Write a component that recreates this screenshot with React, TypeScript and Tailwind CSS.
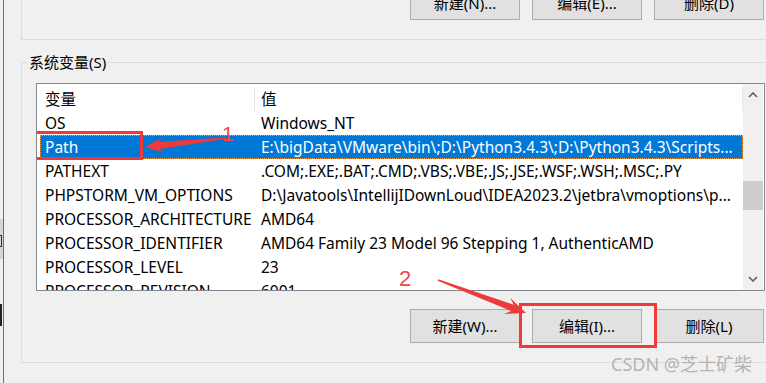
import React from "react";

const rows: [string, string][] = [
  ["OS", "Windows_NT"],
  ["Path", "E:\\bigData\\VMware\\bin\\;D:\\Python3.4.3\\;D:\\Python3.4.3\\Scripts..."],
  ["PATHEXT", ".COM;.EXE;.BAT;.CMD;.VBS;.VBE;.JS;.JSE;.WSF;.WSH;.MSC;.PY"],
  ["PHPSTORM_VM_OPTIONS", "D:\\Javatools\\IntellijIDownLoud\\IDEA2023.2\\jetbra\\vmoptions\\p..."],
  ["PROCESSOR_ARCHITECTURE", "AMD64"],
  ["PROCESSOR_IDENTIFIER", "AMD64 Family 23 Model 96 Stepping 1, AuthenticAMD"],
  ["PROCESSOR_LEVEL", "23"],
  ["PROCESSOR_REVISION", "6001"],
];

// tapered annotation arrow, tail -> tip
function arrowPoints(x1: number, y1: number, x2: number, y2: number, head = 20, half = 8) {
  const dx = x2 - x1;
  const dy = y2 - y1;
  const len = Math.hypot(dx, dy);
  const ux = dx / len;
  const uy = dy / len;
  const px = -uy;
  const py = ux;
  const pt = (bx: number, by: number, along: number, side: number) =>
    `${(bx + ux * along + px * side).toFixed(1)},${(by + uy * along + py * side).toFixed(1)}`;
  return [
    pt(x1, y1, 0, 0.8),
    pt(x2, y2, -head * 0.72, 3.4),
    pt(x2, y2, -head, half),
    pt(x2, y2, 0, 0),
    pt(x2, y2, -head, -half),
    pt(x2, y2, -head * 0.72, -3.4),
    pt(x1, y1, 0, -0.8),
  ].join(" ");
}

const Button = ({ label }: { label: string }) => (
  <div className="w-[110px] h-[34px] bg-[#e1e1e1] border border-[#adadad] flex items-center justify-center text-[15px] text-black">
    {label}
  </div>
);

const Chevron = ({ up }: { up?: boolean }) => (
  <svg width="10" height="6" viewBox="0 0 10 6">
    <polyline
      points={up ? "1,5 5,1 9,5" : "1,1 5,5 9,1"}
      fill="none"
      stroke="#606060"
      strokeWidth="1.6"
    />
  </svg>
);

export default function App() {
  return (
    <div
      className="relative w-[766px] h-[383px] bg-[#f0f0f0] flex overflow-hidden text-black"
      style={{ fontFamily: "'Noto Sans', 'Noto Sans CJK SC', sans-serif" }}
    >
      {/* window behind, left edge */}
      <div className="w-[3px] flex flex-col">
        <div className="h-[219px]" />
        <div className="h-[40px] bg-[#d6d6d6] pt-[16px]">
          <div className="w-[2px] h-[12px] border-y border-r border-[#333]" />
        </div>
        <div className="h-[45px]" />
        <div className="w-[2px] h-[22px] bg-[#222]" />
      </div>
      <div className="w-px bg-[#6e6e6e]" />

      <div className="flex-1 flex flex-col">
        {/* user variables group (cut off) */}
        <div className="ml-[17px] h-[40px] border-l border-b border-[#dcdcdc] flex justify-end items-start gap-[12px] pr-[2px]">
          <div className="-mt-[14px]">
            <Button label="新建(N)..." />
          </div>
          <div className="-mt-[14px]">
            <Button label="编辑(E)..." />
          </div>
          <div className="-mt-[14px]">
            <Button label="删除(D)" />
          </div>
        </div>

        {/* system variables group */}
        <div className="mt-[22px] ml-[17px] h-[301px] border-l border-y border-[#dcdcdc] flex flex-col">
          <div className="-mt-[11px] ml-[6px] px-[1px] w-fit h-[20px] leading-[20px] bg-[#f0f0f0] text-[15px]">
            系统变量(S)
          </div>

          <div className="mt-[11px] ml-[14px] w-[729px] h-[208px] border border-[#828790] bg-white flex text-[15.5px]">
            <div className="w-[706px] overflow-hidden flex flex-col">
              <div className="h-[27px] pt-[3px] ml-[3px] flex shrink-0 leading-[24px]">
                <div className="w-[214px] pl-[5px]">变量</div>
                <div className="flex-1 border-l border-r border-[#e5e5e5] pl-[6px]">值</div>
              </div>
              {rows.map(([name, value]) => {
                const selected = name === "Path";
                return (
                  <div key={name} className="h-[24px] shrink-0 pl-[3px] flex relative">
                    <div
                      className={
                        selected
                          ? "flex-1 flex items-center bg-[#0078d7] text-white border border-dotted border-[#f39c45]"
                          : "flex-1 flex items-center border border-transparent"
                      }
                    >
                      <div className="w-[213px] pl-[4px] whitespace-nowrap overflow-hidden leading-[22px]">
                        {name}
                      </div>
                      <div className="flex-1 pl-[7px] whitespace-nowrap overflow-hidden leading-[22px]">
                        {value}
                      </div>
                    </div>
                    {selected && (
                      <div className="absolute -left-[4px] -top-[4px] w-[110px] h-[29px] border-[3px] border-[#ee3a3a]" />
                    )}
                  </div>
                );
              })}
            </div>
            {/* scrollbar */}
            <div className="w-[20px] bg-[#f0f0f0] flex flex-col">
              <div className="h-[22px] flex items-center justify-center">
                <Chevron up />
              </div>
              <div className="h-[75px]" />
              <div className="h-[29px] bg-[#cdcdcd]" />
              <div className="flex-1" />
              <div className="h-[22px] flex items-center justify-center">
                <Chevron />
              </div>
            </div>
            <div className="w-px" />
          </div>

          <div className="mt-[18px] flex justify-end gap-[12px] pr-[2px]">
            <Button label="新建(W)..." />
            <div className="relative">
              <Button label="编辑(I)..." />
              <div className="absolute -left-[13px] -top-[6px] w-[138px] h-[45px] border-[3px] border-[#ee3a3a]" />
            </div>
            <Button label="删除(L)" />
          </div>
        </div>
      </div>

      {/* annotations */}
      <svg className="absolute inset-0 pointer-events-none" width="766" height="383">
        <polygon points={arrowPoints(227, 138, 145, 147, 19, 8)} fill="#ee3a3a" />
        <polygon points={arrowPoints(438, 280, 526, 313, 20, 8.5)} fill="#ee3a3a" />
      </svg>
      <div
        className="absolute left-[222px] top-[123px] text-[21px] leading-[21px] text-[#f0484a]"
        style={{ fontFamily: "'Liberation Sans', sans-serif" }}
      >
        1
      </div>
      <div
        className="absolute left-[399px] top-[268px] text-[22px] leading-[22px] text-[#f0484a]"
        style={{ fontFamily: "'Liberation Sans', sans-serif" }}
      >
        2
      </div>
      <div className="absolute left-[611px] top-[353px] text-[18px] leading-[22px] text-[#b4b4b4]">
        CSDN @芝士矿柴
      </div>
    </div>
  );
}
